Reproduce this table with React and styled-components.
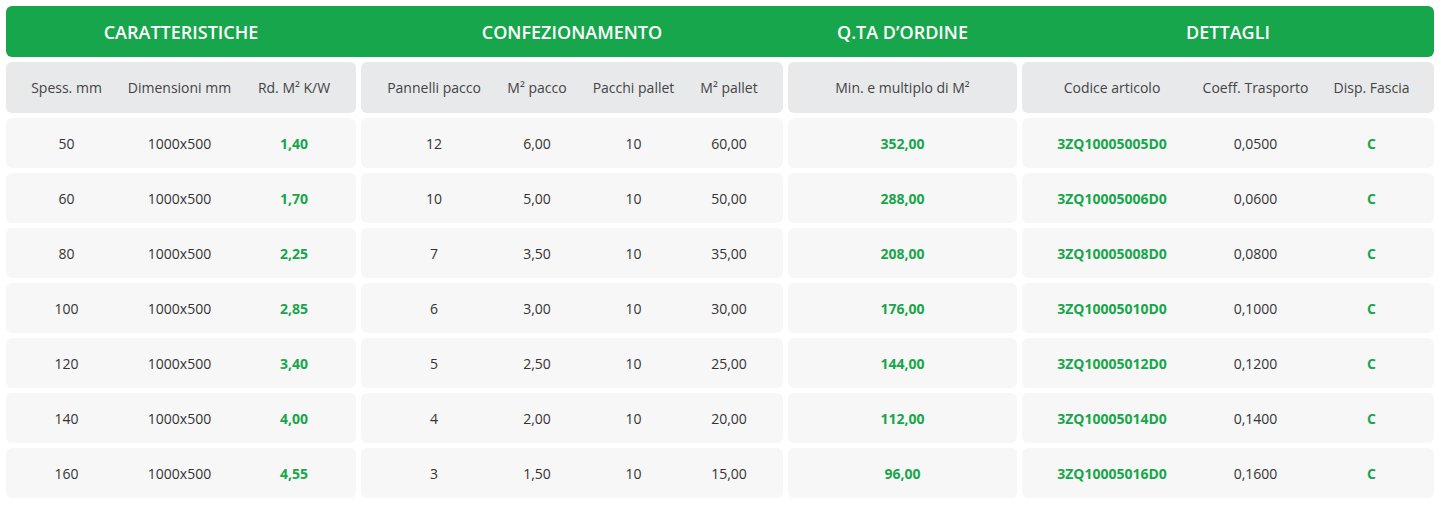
import React from 'react';
import styled, { createGlobalStyle } from 'styled-components';

const GlobalStyle = createGlobalStyle`
  body {
    margin: 0;
    background: #ffffff;
    font-family: "Open Sans", "Liberation Sans", sans-serif;
  }
`;

const GREEN = '#17a64b';
const GROUPS = '350px 422px 229px 412px';

const Table = styled.div`
  display: flex;
  flex-direction: column;
  gap: 5px;
  padding: 6px;
`;

const TitleBar = styled.div`
  display: grid;
  grid-template-columns: ${GROUPS};
  column-gap: 5px;
  height: 51px;
  background: ${GREEN};
  border-radius: 6px;
`;

const Title = styled.div`
  display: flex;
  align-items: center;
  justify-content: center;
  color: #ffffff;
  font-size: 18px;
  font-weight: 600;
  text-transform: uppercase;
`;

const Row = styled.div`
  display: grid;
  grid-template-columns: ${GROUPS};
  column-gap: 5px;
  height: ${props => (props.head ? '51px' : '50px')};
`;

const Group = styled.div`
  display: grid;
  grid-template-columns: ${props => props.cols};
  padding: 0 12.5px;
  border-radius: 6px;
  background: ${props => (props.head ? '#e8e9eb' : '#f7f7f7')};
`;

const Cell = styled.div`
  display: flex;
  align-items: center;
  justify-content: center;
  white-space: nowrap;
  font-size: 14px;
  color: ${props => (props.accent ? GREEN : props.head ? '#444444' : '#333333')};
  font-weight: ${props => (props.accent ? 700 : 400)};
`;

const columns = [
  { cols: '96px 130px 99px', heads: ['Spess. mm', 'Dimensioni mm', 'Rd. M² K/W'], accent: [2] },
  { cols: '121px 85px 108px 83px', heads: ['Pannelli pacco', 'M² pacco', 'Pacchi pallet', 'M² pallet'], accent: [] },
  { cols: '1fr', heads: ['Min. e multiplo di M²'], accent: [0] },
  { cols: '155px 132px 100px', heads: ['Codice articolo', 'Coeff. Trasporto', 'Disp. Fascia'], accent: [0, 2] },
];

const titles = ['Caratteristiche', 'Confezionamento', "Q.ta d'ordine", 'Dettagli'];

const rows = [
  [['50', '1000x500', '1,40'], ['12', '6,00', '10', '60,00'], ['352,00'], ['3ZQ10005005D0', '0,0500', 'C']],
  [['60', '1000x500', '1,70'], ['10', '5,00', '10', '50,00'], ['288,00'], ['3ZQ10005006D0', '0,0600', 'C']],
  [['80', '1000x500', '2,25'], ['7', '3,50', '10', '35,00'], ['208,00'], ['3ZQ10005008D0', '0,0800', 'C']],
  [['100', '1000x500', '2,85'], ['6', '3,00', '10', '30,00'], ['176,00'], ['3ZQ10005010D0', '0,1000', 'C']],
  [['120', '1000x500', '3,40'], ['5', '2,50', '10', '25,00'], ['144,00'], ['3ZQ10005012D0', '0,1200', 'C']],
  [['140', '1000x500', '4,00'], ['4', '2,00', '10', '20,00'], ['112,00'], ['3ZQ10005014D0', '0,1400', 'C']],
  [['160', '1000x500', '4,55'], ['3', '1,50', '10', '15,00'], ['96,00'], ['3ZQ10005016D0', '0,1600', 'C']],
];

export default function App() {
  return (
    <>
      <GlobalStyle />
      <Table>
        <TitleBar>
          {titles.map(t => (
            <Title key={t}>{t.replace("'", '’')}</Title>
          ))}
        </TitleBar>
        <Row head>
          {columns.map((g, i) => (
            <Group key={i} head cols={g.cols}>
              {g.heads.map(h => (
                <Cell key={h} head>{h}</Cell>
              ))}
            </Group>
          ))}
        </Row>
        {rows.map((r, ri) => (
          <Row key={ri}>
            {r.map((vals, gi) => (
              <Group key={gi} cols={columns[gi].cols}>
                {vals.map((v, vi) => (
                  <Cell key={vi} accent={columns[gi].accent.includes(vi)}>{v}</Cell>
                ))}
              </Group>
            ))}
          </Row>
        ))}
      </Table>
    </>
  );
}
